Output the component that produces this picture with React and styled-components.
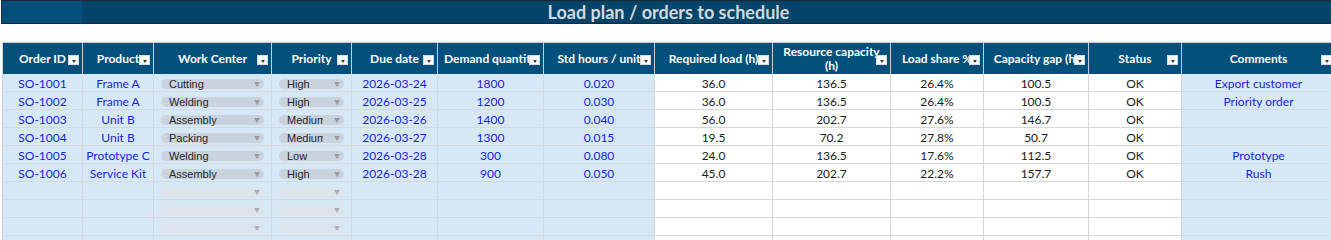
import React from 'react'
import styled, { createGlobalStyle } from 'styled-components'

const GlobalStyle = createGlobalStyle`
  html, body {
    margin: 0;
    background: #ffffff;
    overflow: hidden;
  }
  body {
    font-family: Lato, 'Liberation Sans', sans-serif;
  }
`

const columns = [
  { key: 'id', label: 'Order ID', width: 80, kind: 'input' },
  { key: 'product', label: 'Product', width: 71, kind: 'input' },
  { key: 'center', label: 'Work Center', width: 118, kind: 'select' },
  { key: 'priority', label: 'Priority', width: 80, kind: 'select' },
  { key: 'due', label: 'Due date', width: 86, kind: 'input' },
  { key: 'qty', label: 'Demand quantity', width: 106, kind: 'input' },
  { key: 'hours', label: 'Std hours / unit', width: 111, kind: 'input' },
  { key: 'load', label: 'Required load (h)', width: 118, kind: 'calc' },
  { key: 'capacity', label: 'Resource capacity\n(h)', width: 118, kind: 'calc' },
  { key: 'share', label: 'Load share %', width: 93, kind: 'calc' },
  { key: 'gap', label: 'Capacity gap (h)', width: 105, kind: 'calc' },
  { key: 'status', label: 'Status', width: 93, kind: 'calc' },
  { key: 'comments', label: 'Comments', width: 154, kind: 'input' },
]

const orders = [
  { id: 'SO-1001', product: 'Frame A', center: 'Cutting', priority: 'High', due: '2026-03-24', qty: '1800', hours: '0.020', load: '36.0', capacity: '136.5', share: '26.4%', gap: '100.5', status: 'OK', comments: 'Export customer' },
  { id: 'SO-1002', product: 'Frame A', center: 'Welding', priority: 'High', due: '2026-03-25', qty: '1200', hours: '0.030', load: '36.0', capacity: '136.5', share: '26.4%', gap: '100.5', status: 'OK', comments: 'Priority order' },
  { id: 'SO-1003', product: 'Unit B', center: 'Assembly', priority: 'Medium', due: '2026-03-26', qty: '1400', hours: '0.040', load: '56.0', capacity: '202.7', share: '27.6%', gap: '146.7', status: 'OK', comments: '' },
  { id: 'SO-1004', product: 'Unit B', center: 'Packing', priority: 'Medium', due: '2026-03-27', qty: '1300', hours: '0.015', load: '19.5', capacity: '70.2', share: '27.8%', gap: '50.7', status: 'OK', comments: '' },
  { id: 'SO-1005', product: 'Prototype C', center: 'Welding', priority: 'Low', due: '2026-03-28', qty: '300', hours: '0.080', load: '24.0', capacity: '136.5', share: '17.6%', gap: '112.5', status: 'OK', comments: 'Prototype' },
  { id: 'SO-1006', product: 'Service Kit', center: 'Assembly', priority: 'High', due: '2026-03-28', qty: '900', hours: '0.050', load: '45.0', capacity: '202.7', share: '22.2%', gap: '157.7', status: 'OK', comments: 'Rush' },
]

const emptyRows = 4
const gridTemplate = columns.map(c => `${c.width}px`).join(' ')

function Sheet() {
  const rows = [...orders, ...Array.from({ length: emptyRows }, () => null)]
  return (
    <Page>
      <TitleBar>
        <TitleCorner />
        <TitleText>Load plan / orders to schedule</TitleText>
      </TitleBar>
      <Spacer />
      <Table>
        <HeaderRow>
          {columns.map(col => (
            <HeaderCell key={col.key}>
              <HeaderLabel>{col.label}</HeaderLabel>
              <FilterButton />
            </HeaderCell>
          ))}
        </HeaderRow>
        {rows.map((row, i) => (
          <DataRow key={i}>
            {columns.map(col => {
              if (col.kind === 'select') {
                return (
                  <Cell key={col.key} $kind="input" $align="top">
                    <Pill $empty={!row}>
                      <PillLabel>{row ? row[col.key] : ''}</PillLabel>
                      <PillArrow $empty={!row} />
                    </Pill>
                  </Cell>
                )
              }
              return (
                <Cell key={col.key} $kind={col.kind}>
                  {row ? row[col.key] : ''}
                </Cell>
              )
            })}
          </DataRow>
        ))}
      </Table>
    </Page>
  )
}

export default function App() {
  return (
    <>
      <GlobalStyle />
      <Sheet />
    </>
  )
}

const Page = styled.div`
  width: 1331px;
  height: 240px;
  overflow: hidden;
`

const TitleBar = styled.div`
  display: flex;
  height: 24px;
  margin-left: 1px;
  box-sizing: border-box;
  border-top: 1px solid #1d2833;
  border-bottom: 1px solid #1d2833;
  border-left: 1px solid #1d2833;
  background: #03446a;
`

const TitleCorner = styled.div`
  flex: 0 0 80px;
  background: #024f7b;
`

const TitleText = styled.div`
  flex: 1;
  padding-right: 76px;
  display: flex;
  align-items: center;
  justify-content: center;
  color: #d3d8dc;
  font-weight: 700;
  font-size: 18px;
  line-height: 20px;
  white-space: nowrap;
`

const Spacer = styled.div`
  height: 18px;
`

const Table = styled.div`
  margin-left: 2px;
  border-left: 1px solid #d0d4d8;
  width: max-content;
`

const HeaderRow = styled.div`
  display: grid;
  grid-template-columns: ${gridTemplate};
  height: 32px;
  box-sizing: border-box;
  border-top: 1px solid #c9cdd1;
`

const HeaderCell = styled.div`
  position: relative;
  display: flex;
  align-items: center;
  justify-content: center;
  box-sizing: border-box;
  padding: 0 2px;
  background: #02507b;
  border-right: 1px solid #c2ccd5;
  overflow: hidden;
`

const HeaderLabel = styled.span`
  color: #ffffff;
  font-weight: 700;
  font-size: 12px;
  line-height: 14px;
  text-align: center;
  white-space: pre;
`

const FilterButton = styled.span`
  position: absolute;
  right: 3px;
  top: 12px;
  width: 11px;
  height: 10px;
  box-sizing: border-box;
  background: #ffffff;
  border: 1px solid #d6dbe0;

  &::after {
    content: '';
    position: absolute;
    left: 2.5px;
    top: 3.5px;
    border-left: 2.5px solid transparent;
    border-right: 2.5px solid transparent;
    border-top: 3px solid #3a3a3a;
  }
`

const DataRow = styled.div`
  display: grid;
  grid-template-columns: ${gridTemplate};
  height: 18px;
`

const Cell = styled.div`
  display: flex;
  align-items: ${p => (p.$align === 'top' ? 'flex-start' : 'flex-end')};
  justify-content: center;
  box-sizing: border-box;
  padding: ${p => (p.$align === 'top' ? '5px 7px 0' : '0 3px')};
  background: ${p => (p.$kind === 'calc' ? '#ffffff' : '#d6e8f5')};
  color: ${p => (p.$kind === 'calc' ? '#1b1b1b' : '#1c1cf0')};
  border-right: 1px solid #d4d8dc;
  border-bottom: 1px solid #d4d8dc;
  font-size: 12px;
  line-height: 14px;
  white-space: nowrap;
  overflow: hidden;
`

const Pill = styled.div`
  flex: 1;
  min-width: 0;
  display: flex;
  align-items: center;
  height: 10px;
  padding: 0 4px 0 8px;
  border-radius: 5px;
  background: ${p => (p.$empty ? '#dde4eb' : '#c9d3de')};
`

const PillLabel = styled.span`
  flex: 1;
  min-width: 0;
  height: 13px;
  overflow: hidden;
  color: #262626;
  font-family: 'Liberation Sans', Arial, sans-serif;
  font-size: 11px;
  line-height: 13px;
  white-space: nowrap;
`

const PillArrow = styled.span`
  flex: 0 0 auto;
  margin-left: 11px;
  width: 0;
  height: 0;
  border-left: 3.5px solid transparent;
  border-right: 3.5px solid transparent;
  border-top: 5px solid ${p => (p.$empty ? '#a9afb5' : '#979da3')};
`
